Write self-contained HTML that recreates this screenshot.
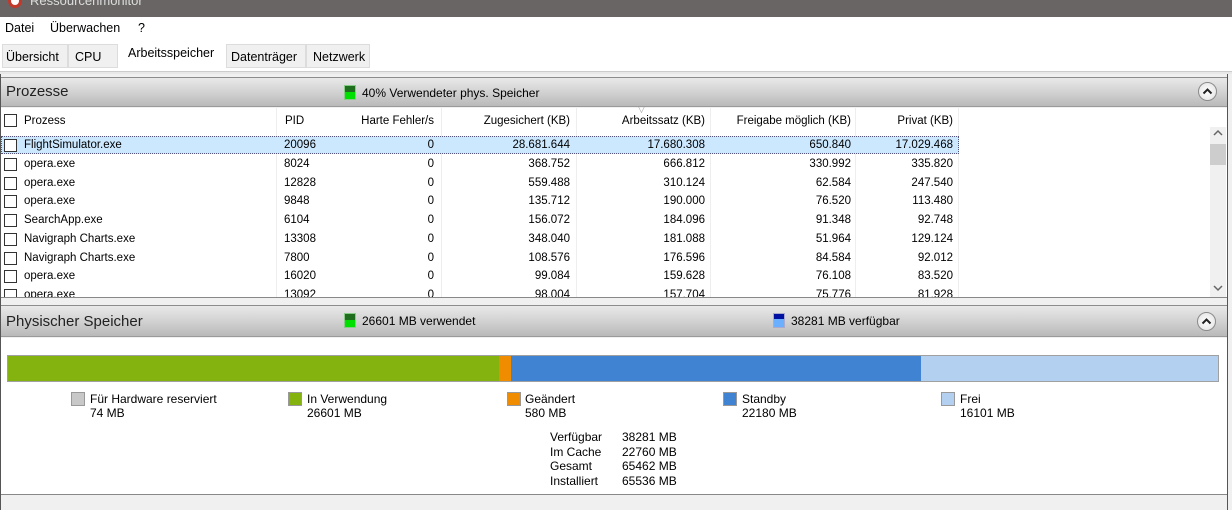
<!DOCTYPE html>
<html><head><meta charset="utf-8">
<style>
*{margin:0;padding:0;box-sizing:border-box}
body{width:1232px;height:510px;overflow:hidden;background:#f0f0f0;font-family:"Liberation Sans",sans-serif;font-size:11.5px;color:#000;position:relative}
.a{position:absolute;white-space:nowrap}
.hdr{position:absolute;left:1px;width:1226px;background:linear-gradient(#e9e9e9,#d2d2d2 50%,#b9b9b9);border-top:1px solid #8d8d8d;border-bottom:1px solid #9a9a9a}
.cb{position:absolute;width:13px;height:13px;border:1px solid #333;background:#fff}
.r{text-align:right}
.sq{position:absolute;width:14px;height:14px;border:1px solid #999}
.btn{position:absolute;width:19px;height:19px;border-radius:50%;border:1px solid #8a8a8a;background:radial-gradient(#fff,#e0e0e0)}
</style></head><body>
<div class="a" style="left:0;top:0;width:1232px;height:17px;background:#6a6565"></div>
<div class="a" style="left:8px;top:-6px;width:14px;height:14px;border-radius:50%;background:#fff;border:3px solid #c0392b"></div>
<div class="a" style="left:30px;top:-7px;color:#ddd;font-size:13px">Ressourcenmonitor</div>
<div class="a" style="left:0;top:17px;width:1232px;height:21px;background:#fff"></div>
<div class="a" style="left:5px;top:21px;font-size:12.5px">Datei</div>
<div class="a" style="left:50px;top:21px;font-size:12.5px">Überwachen</div>
<div class="a" style="left:138px;top:21px;font-size:12.5px">?</div>
<div class="a" style="left:0;top:38px;width:1232px;height:34px;background:#fff"></div>
<div class="a" style="left:2px;top:44px;width:66px;height:24px;background:#f0f0f0;border:1px solid #dcdcdc"></div>
<div class="a" style="left:6px;top:50px;font-size:12.5px">Übersicht</div>
<div class="a" style="left:68px;top:44px;width:50px;height:24px;background:#f0f0f0;border:1px solid #dcdcdc"></div>
<div class="a" style="left:75px;top:50px;font-size:12.5px">CPU</div>
<div class="a" style="left:128px;top:46px;font-size:12.5px">Arbeitsspeicher</div>
<div class="a" style="left:226px;top:44px;width:80px;height:24px;background:#f0f0f0;border:1px solid #dcdcdc"></div>
<div class="a" style="left:231px;top:50px;font-size:12.5px">Datenträger</div>
<div class="a" style="left:306px;top:44px;width:64px;height:24px;background:#f0f0f0;border:1px solid #dcdcdc"></div>
<div class="a" style="left:313px;top:50px;font-size:12.5px">Netzwerk</div>
<div class="a" style="left:0;top:71px;width:1232px;height:3px;background:#e8e8e8;border-top:1px solid #ccc"></div>
<div class="a" style="left:1227px;top:74px;width:5px;height:436px;background:#f0f0f0;border-left:1px solid #555"></div>
<div class="a" style="left:0;top:74px;width:1px;height:436px;background:#555"></div>
<div class="hdr" style="top:77px;height:30px"></div>
<div class="a" style="left:6px;top:83px;font-size:15px;color:#222">Prozesse</div>
<div class="a" style="left:344px;top:85px;width:12px;height:15px;background:linear-gradient(#1e6e1e 45%,#00e000 45%);border:1px solid #8c8"></div>
<div class="a" style="left:362px;top:86px;font-size:12px">40% Verwendeter phys. Speicher</div>
<div class="btn" style="left:1198px;top:82px"><svg width="17" height="17" viewBox="0 0 17 17" style="position:absolute;left:0;top:0"><path d="M4.5 10.5 L8.5 6.5 L12.5 10.5" fill="none" stroke="#222" stroke-width="2"/></svg></div>
<div class="a" style="left:1px;top:108px;width:1226px;height:189px;background:#fff"></div>
<div class="cb" style="left:4px;top:114px"></div>
<div class="a" style="left:24px;top:115px">Prozess</div>
<div class="a" style="left:285px;top:115px">PID</div>
<div class="a r" style="left:300px;top:115px;width:134px">Harte Fehler/s</div>
<div class="a r" style="left:440px;top:115px;width:130px">Zugesichert (KB)</div>
<div class="a r" style="left:575px;top:115px;width:130px">Arbeitssatz (KB)</div>
<div class="a" style="left:638px;top:104px;color:#999;font-size:9px">▽</div>
<div class="a r" style="left:710px;top:115px;width:141px">Freigabe möglich (KB)</div>
<div class="a r" style="left:855px;top:115px;width:98px">Privat (KB)</div>
<div class="a" style="left:276px;top:108px;width:1px;height:189px;background:#eee"></div>
<div class="a" style="left:441px;top:108px;width:1px;height:189px;background:#eee"></div>
<div class="a" style="left:576px;top:108px;width:1px;height:189px;background:#eee"></div>
<div class="a" style="left:710px;top:108px;width:1px;height:189px;background:#eee"></div>
<div class="a" style="left:855px;top:108px;width:1px;height:189px;background:#eee"></div>
<div class="a" style="left:958px;top:108px;width:1px;height:189px;background:#eee"></div>
<div class="a" style="left:1px;top:136px;width:958px;height:18px;background:#cce8ff;border:1px dotted #557"></div>
<div id="rows"></div>
<div class="a" style="left:1210px;top:127px;width:16px;height:170px;background:#f0f0f0"></div>
<svg class="a" style="left:1213px;top:129px" width="10" height="8"><path d="M1 6 L5 2 L9 6" fill="none" stroke="#666" stroke-width="1.5"/></svg>
<div class="a" style="left:1210px;top:144px;width:16px;height:21px;background:#cdcdcd"></div>
<svg class="a" style="left:1213px;top:284px" width="10" height="8"><path d="M1 2 L5 6 L9 2" fill="none" stroke="#666" stroke-width="1.5"/></svg>
<div class="a" style="left:1px;top:297px;width:1226px;height:7px;background:#f0f0f0;border-top:1px solid #888"></div>
<div class="hdr" style="top:305px;height:32px"></div>
<div class="a" style="left:6px;top:313px;font-size:15px;color:#222">Physischer Speicher</div>
<div class="a" style="left:344px;top:313px;width:12px;height:15px;background:linear-gradient(#1e6e1e 45%,#00e000 45%);border:1px solid #8c8"></div>
<div class="a" style="left:362px;top:314px;font-size:12px">26601 MB verwendet</div>
<div class="a" style="left:773px;top:313px;width:12px;height:15px;background:linear-gradient(#0010a0 40%,#6ab0ff 40%);border:1px solid #aac"></div>
<div class="a" style="left:791px;top:314px;font-size:12px">38281 MB verfügbar</div>
<div class="btn" style="left:1197px;top:312px"><svg width="17" height="17" viewBox="0 0 17 17" style="position:absolute;left:0;top:0"><path d="M4.5 10.5 L8.5 6.5 L12.5 10.5" fill="none" stroke="#222" stroke-width="2"/></svg></div>
<div class="a" style="left:1px;top:338px;width:1226px;height:157px;background:#fff;border-bottom:1px solid #888"></div>
<div class="a" style="left:7px;top:355px;width:1212px;height:27px;border:1px solid #a0a0a0;display:flex">
<div style="width:491px;background:#84b20e"></div><div style="width:12px;background:#f08c00"></div><div style="width:410px;background:#3f83d2"></div><div style="flex:1;background:#b3d0f0"></div></div>
<div class="sq" style="left:71px;top:392px;background:#c8c8c8"></div>
<div class="a" style="left:90px;top:392px;font-size:12px">Für Hardware reserviert<br>74 MB</div>
<div class="sq" style="left:288px;top:392px;background:#84b20e"></div>
<div class="a" style="left:307px;top:392px;font-size:12px">In Verwendung<br>26601 MB</div>
<div class="sq" style="left:507px;top:392px;background:#f08c00"></div>
<div class="a" style="left:525px;top:392px;font-size:12px">Geändert<br>580 MB</div>
<div class="sq" style="left:723px;top:392px;background:#3f83d2"></div>
<div class="a" style="left:742px;top:392px;font-size:12px">Standby<br>22180 MB</div>
<div class="sq" style="left:941px;top:392px;background:#b3d0f0"></div>
<div class="a" style="left:960px;top:392px;font-size:12px">Frei<br>16101 MB</div>
<div class="a" style="left:550px;top:430px;line-height:14.5px;font-size:12px">Verfügbar<br>Im Cache<br>Gesamt<br>Installiert</div>
<div class="a" style="left:622px;top:430px;line-height:14.5px;font-size:12px">38281 MB<br>22760 MB<br>65462 MB<br>65536 MB</div>
<script>
var d=[["FlightSimulator.exe","20096","28.681.644","17.680.308","650.840","17.029.468"],
["opera.exe","8024","368.752","666.812","330.992","335.820"],
["opera.exe","12828","559.488","310.124","62.584","247.540"],
["opera.exe","9848","135.712","190.000","76.520","113.480"],
["SearchApp.exe","6104","156.072","184.096","91.348","92.748"],
["Navigraph Charts.exe","13308","348.040","181.088","51.964","129.124"],
["Navigraph Charts.exe","7800","108.576","176.596","84.584","92.012"],
["opera.exe","16020","99.084","159.628","76.108","83.520"],
["opera.exe","13092","98.004","157.704","75.776","81.928"]];
var h="";
d.forEach(function(r,i){var t=137+i*18.75;
h+='<div class="cb" style="left:4px;top:'+(t+2)+'px"></div>'+
'<div class="a" style="left:24px;top:'+(t+2)+'px">'+r[0]+'</div>'+
'<div class="a" style="left:284px;top:'+(t+2)+'px">'+r[1]+'</div>'+
'<div class="a r" style="left:380px;top:'+(t+2)+'px;width:54px">0</div>'+
'<div class="a r" style="left:450px;top:'+(t+2)+'px;width:120px">'+r[2]+'</div>'+
'<div class="a r" style="left:585px;top:'+(t+2)+'px;width:120px">'+r[3]+'</div>'+
'<div class="a r" style="left:720px;top:'+(t+2)+'px;width:131px">'+r[4]+'</div>'+
'<div class="a r" style="left:860px;top:'+(t+2)+'px;width:93px">'+r[5]+'</div>';});
document.getElementById("rows").innerHTML=h;
</script>
</body></html>
